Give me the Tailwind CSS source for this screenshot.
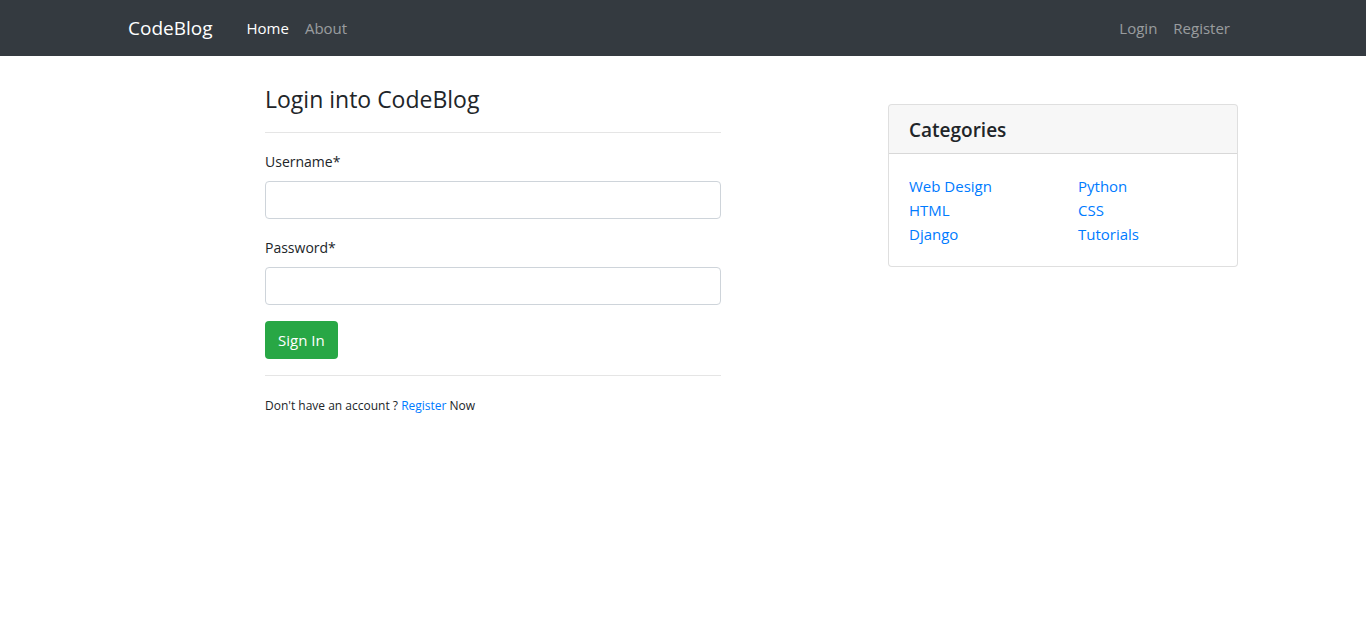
<!DOCTYPE html>
<html lang="en">
<head>
<meta charset="utf-8">
<meta name="viewport" content="width=device-width, initial-scale=1">
<title>CodeBlog - Login</title>
<script src="https://cdn.jsdelivr.net/npm/@tailwindcss/browser@4"></script>
</head>
<body class="bg-white font-['Segoe_UI','Open_Sans',sans-serif] text-[15px] leading-6 text-[#212529]">
<header class="bg-[#343a40]">
  <nav class="mx-auto flex h-14 max-w-[1140px] items-center px-[15px]">
    <a href="#" class="mr-[26px] text-[19px] leading-[30px] text-white">CodeBlog</a>
    <a href="#" class="p-2 text-white">Home</a>
    <a href="#" class="p-2 text-white/50">About</a>
    <a href="#" class="ml-auto p-2 text-white/50">Login</a>
    <a href="#" class="p-2 text-white/50">Register</a>
  </nav>
</header>
<main class="mx-auto flex max-w-[1140px]">
  <section class="w-2/3">
    <div class="mx-auto w-3/5 pt-[25px]">
      <form>
        <h1 class="mb-4 border-b border-black/10 pb-[15px] text-[23px] leading-9">Login into CodeBlog</h1>
        <div class="mb-4">
          <label for="username" class="mb-1.5 block text-sm leading-[26px]">Username*</label>
          <input id="username" type="text" class="block h-[38px] w-full rounded border border-[#ced4da] bg-white px-3">
        </div>
        <div class="mb-4">
          <label for="password" class="mb-1.5 block text-sm leading-[26px]">Password*</label>
          <input id="password" type="password" class="block h-[38px] w-full rounded border border-[#ced4da] bg-white px-3">
        </div>
        <button type="submit" class="block h-[38px] rounded bg-[#28a745] px-[13px] text-white">Sign In</button>
      </form>
      <p class="mt-4 border-t border-black/10 pt-[18px] text-xs leading-6">Don't have an account ? <a href="#" class="text-[#007bff]">Register</a> Now</p>
    </div>
  </section>
  <aside class="w-1/3 px-[15px] pt-12">
    <div class="overflow-hidden rounded border border-black/[.125] bg-white">
      <h2 class="border-b border-black/[.125] bg-black/[.03] px-5 pt-[13px] pb-[11px] text-[19px] leading-6 font-semibold">Categories</h2>
      <div class="grid grid-cols-2 gap-x-[30px] p-5 text-[#007bff]">
        <ul>
          <li><a href="#">Web Design</a></li>
          <li><a href="#">HTML</a></li>
          <li><a href="#">Django</a></li>
        </ul>
        <ul>
          <li><a href="#">Python</a></li>
          <li><a href="#">CSS</a></li>
          <li><a href="#">Tutorials</a></li>
        </ul>
      </div>
    </div>
  </aside>
</main>
</body>
</html>
